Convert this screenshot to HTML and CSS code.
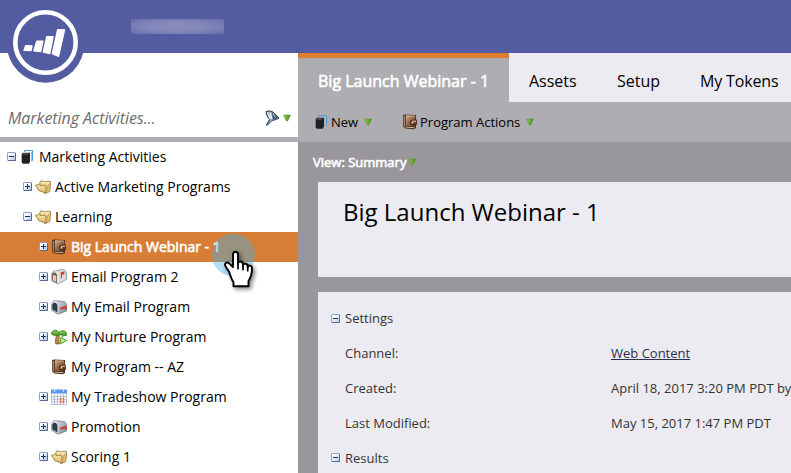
FILE: index.html
```html
<!DOCTYPE html>
<html lang="en">
<head>
<meta charset="utf-8">
<title>Marketing Activities</title>
<link rel="stylesheet" href="styles.css">
</head>
<body>
<svg class="sprites" width="0" height="0" aria-hidden="true">
  <defs>
    <linearGradient id="gbox" x1="0" y1="0" x2="1" y2="1"><stop offset="0" stop-color="#fff"/><stop offset=".4" stop-color="#f4f8ff"/><stop offset="1" stop-color="#a9bee0"/></linearGradient>
    <linearGradient id="gfold" x1="0" y1="0" x2="0" y2="1"><stop offset="0" stop-color="#ffeab0"/><stop offset="1" stop-color="#dcb25e"/></linearGradient>
    <linearGradient id="gbrown" x1="0" y1="0" x2="1" y2="1"><stop offset="0" stop-color="#d3ae90"/><stop offset=".5" stop-color="#94694a"/><stop offset="1" stop-color="#5b3821"/></linearGradient>
    <linearGradient id="gsteel" x1="0" y1="0" x2="1" y2="1"><stop offset="0" stop-color="#e4e9ee"/><stop offset="1" stop-color="#7b8690"/></linearGradient>
    <linearGradient id="gtri" x1="0" y1="0" x2="1" y2="0"><stop offset="0" stop-color="#8fca5a"/><stop offset=".45" stop-color="#6fb536"/><stop offset="1" stop-color="#3c7f14"/></linearGradient>
  </defs>
  <symbol id="minus" viewBox="0 0 9 9"><rect x=".5" y=".5" width="8" height="8" rx=".6" fill="url(#gbox)" stroke="#8ba0c2"/><path d="M8.500 1v7.500H1" fill="none" stroke="#526b92"/><path d="M2 4.500h5" stroke="#1d3153"/></symbol>
  <symbol id="plus" viewBox="0 0 9 9"><rect x=".5" y=".5" width="8" height="8" rx=".6" fill="url(#gbox)" stroke="#8ba0c2"/><path d="M8.500 1v7.500H1" fill="none" stroke="#526b92"/><path d="M2 4.500h5M4.500 2v5" stroke="#1d3153"/></symbol>
  <symbol id="stack" viewBox="0 0 16 16"><path d="M5.500 3V1.500h8v10h-1.500" fill="none" stroke="#449bdc" stroke-width="1"/><path d="M12.500 3v8.500" stroke="#8cc3ec" stroke-width="1"/><path d="M2.700 5 4 3.700h7V12.500L9.800 14.700H4L2.700 13.600z" fill="#202123"/><path d="M3.700 5h5.600" stroke="#64676b" stroke-width="1"/></symbol>
  <symbol id="folder" viewBox="0 0 16 16"><path d="M4.500 4.200 6 1.600l3 1.200 6.300-.6.300 1.500-1 8.800-5 2z" fill="#f2d88f" stroke="#92793e" stroke-width=".8"/><path d="M6.500 3.700 14 3.900" stroke="#fff4cd"/><path d="M.5 6.200 4 5.500l1.200 1 4.800-.3.600.9.600 7L3.800 11.700z" fill="url(#gfold)" stroke="#8f7031" stroke-width=".8" stroke-linejoin="round"/><path d="M11.200 14 14.600 12.500l.9-8.500-3.200 3z" fill="#e3c170" stroke="#94783f" stroke-width=".5"/></symbol>
  <symbol id="book" viewBox="0 0 16 16"><path d="M1.200 1 3 .5l11 .5v13l-2 1.200L3.500 14.500l-2.300-1.700z" fill="#4a2f1c"/><path d="M3.900 1.500 13.300 1.900v10.300l-9.400-.4z" fill="url(#gbrown)"/><path d="M4 1.700 13 2" stroke="#e4cbb5" stroke-width=".7"/><path d="M2.500 2v10.700" stroke="#a98365" stroke-width="1.200"/><path d="M3.500 13.100 12.500 13.700" stroke="#cdb49c" stroke-width="1"/><path d="M14.500 6 9.900 6.300a2.200 2.200 0 0 0 0 4.300l4.600-.2z" fill="#6d4326" stroke="#331c0e" stroke-width=".8"/><path d="M10 7.200h4.200" stroke="#ecd4be" stroke-width="1"/><circle cx="10.300" cy="8.800" r=".9" fill="#f3ded0"/></symbol>
  <symbol id="mailbox" viewBox="0 0 16 16"><path d="M.6 5.800C1 2 4 1.200 5.500 1.800l7.500.8c2 .6 2.700 2.500 2.500 5V12L7 15.200.8 11.500z" fill="url(#gsteel)" stroke="#68727c" stroke-width=".7"/><path d="M1.300 10.600V5.800C2 3 5.600 2.700 6.700 6.400v7z" fill="#343c45"/><path d="M7.200 14.500V7C7 4 5.500 2.500 4 2.200" fill="none" stroke="#eef2f5" stroke-width=".9"/><path d="M1.300 11.200 6.700 14" stroke="#bdc6cf"/><path d="m9.300 8.400 5.300-1.500v-.7l1 .2v4l-1 .3V9.500L9.300 10.600z" fill="#d93829"/></symbol>
  <symbol id="mailopen" viewBox="0 0 16 16"><path d="M.6 5.500C1 2 3.300 1.500 4.500 2l6-1.500c3 0 5 1.500 5 4.500v5.300L6.700 15 .8 12z" fill="#d6dce1" stroke="#747e88" stroke-width=".7"/><path d="M1.100 11.300V5.500C1.900 2.700 5.300 3 6.300 6.300v8z" fill="#765d4e"/><path d="m2 6 3.200 1v5.700L2 11.200z" fill="#eee5da"/><path d="m2.300 7.500 2.500 4M4.800 7.700l-2.300 2.900" stroke="#af947f" stroke-width=".6"/><path d="M7 14.200V6.500C7 4 5.500 2.500 4.500 2" fill="none" stroke="#fff"/><path d="M9.800 9.500V3.300l3.500-.9v2.800l-2.300.6v3.300z" fill="#d83b2e"/></symbol>
  <symbol id="palm" viewBox="0 0 16 16"><path d="M6.500 5.500C4.300 8 4 12 4.700 15h4C7.700 12 7.700 8 9 5.500z" fill="#ad7845" stroke="#6f4825" stroke-width=".6"/><path d="M4.800 8h2.900M4.600 10.300h2.700M4.800 12.700h2.900" stroke="#e0b881" stroke-width=".6"/><path d="M7.500 3.500C6.500.5 3 .4.600 3.300l.3 2.500 2-.7-.1 1.900 2.500-1 .2 1.500L8 5.300l3 .7.500 2 1.200-1.500 2.700.2C16 2.200 12.500-.1 7.500 3.500z" fill="#55a52d" stroke="#2e7112" stroke-width=".7" stroke-linejoin="round"/><path d="M2 3.500Q5 1.500 7 4.500M8.500 4q3-2 5.500-.3" stroke="#a8dc71" fill="none" stroke-width=".9"/><path d="m9.700 8.500 5.800 3-5.800 3.200z" fill="#c2efa0" stroke="#459c1d" stroke-width="1" stroke-linejoin="round"/></symbol>
  <symbol id="calendar" viewBox="0 0 16 16"><path d="M.4 2h15.200v13.600H.4z" fill="#fff" stroke="#8f9eb8" stroke-width=".7"/><path d="M0 .5h16v4H0z" fill="#5b97ea"/><path d="M3.500.3v2.500M12.500.3v2.500" stroke="#d5e6ff" stroke-width="1.200"/><path d="M3.500 5v10.500M6.500 5v10.500M9.500 5v10.500M12.500 5v10.500M.5 7.500h15M.5 10.200h15M.5 12.900h15" stroke="#9aa7bf" stroke-width=".7"/><path d="M9.500 9.800h3.200v3.200H9.500z" fill="#fff" stroke="#dc6537" stroke-width="1.100"/></symbol>
  <symbol id="tri" viewBox="0 0 8 8"><path d="M.6 1h6.800L4.700 7h-1.400z" fill="url(#gtri)" stroke="#4f8f28" stroke-width=".5" stroke-linejoin="round"/></symbol>
</svg>

<header class="topbar">
  <div class="account"></div>
  <svg class="logo" viewBox="0 0 92 84"><circle cx="45.500" cy="44" r="38.700" fill="#545ca1"/><circle cx="45.500" cy="42.500" r="30.200" fill="#545ca1" stroke="#fff" stroke-width="4.600"/><g fill="#fff" stroke="#fff" stroke-linejoin="round" stroke-width="1.200"><path d="m25.600 45.700 6.500.1-1 4.800-7.200-.2z"/><path d="m36.700 41.200 6.300-.1-2.300 10.500-6.900-.8z"/><path d="m46.700 36.700 6.500-.1-3.400 17.100-6.600-1.600z"/><path d="m57.600 29.700 7 .1-6 26.600-6.400-2.600z"/></g></svg>
</header>

<div class="workspace">
  <aside class="sidebar">
    <div class="search">
      <span class="search-text">Marketing Activities...</span>
      <svg class="filter" viewBox="0 0 16 16"><path d="M1 1.500Q4 0 8 2L14 8q-3 2-7 2.500L2 15.500 1.300 15 4.500 9.500Q1 6 1 1.500z" fill="#8fa2b8" stroke="#2c4059" stroke-width="1"/><path d="m2.500 2.500 3 6.500M5 2.500l2 6.500" stroke="#edf5fc" stroke-width="1.400"/><path d="M7 2.500 13 8 8 9.500z" fill="#334963"/><path d="m8 3.700 2.500 4.500" stroke="#a7bad0"/></svg>
      <svg class="tri"><use href="#tri"/></svg>
    </div>
    <nav class="tree">
      <div class="node root"><svg class="exp"><use href="#minus"/></svg><svg class="ico"><use href="#stack"/></svg><span>Marketing Activities</span></div>
      <div class="node l1"><svg class="exp"><use href="#plus"/></svg><svg class="ico"><use href="#folder"/></svg><span>Active Marketing Programs</span></div>
      <div class="node l1"><svg class="exp"><use href="#minus"/></svg><svg class="ico"><use href="#folder"/></svg><span>Learning</span></div>
      <div class="node l2 selected"><svg class="exp"><use href="#plus"/></svg><svg class="ico"><use href="#book"/></svg><span class="heavy">Big Launch Webinar - 1</span></div>
      <div class="node l2"><svg class="exp"><use href="#plus"/></svg><svg class="ico"><use href="#mailopen"/></svg><span>Email Program 2</span></div>
      <div class="node l2"><svg class="exp"><use href="#plus"/></svg><svg class="ico"><use href="#mailbox"/></svg><span>My Email Program</span></div>
      <div class="node l2"><svg class="exp"><use href="#plus"/></svg><svg class="ico"><use href="#palm"/></svg><span>My Nurture Program</span></div>
      <div class="node l2"><span class="exp"></span><svg class="ico"><use href="#book"/></svg><span>My Program -- AZ</span></div>
      <div class="node l2"><svg class="exp"><use href="#plus"/></svg><svg class="ico"><use href="#calendar"/></svg><span>My Tradeshow Program</span></div>
      <div class="node l2"><svg class="exp"><use href="#plus"/></svg><svg class="ico"><use href="#mailbox"/></svg><span>Promotion</span></div>
      <div class="node l2"><svg class="exp"><use href="#plus"/></svg><svg class="ico"><use href="#folder"/></svg><span>Scoring 1</span></div>
    </nav>
  </aside>

  <main class="content">
    <div class="tabs">
      <div class="tab active heavy">Big Launch Webinar - 1</div>
      <div class="tab">Assets</div>
      <div class="tab">Setup</div>
      <div class="tab">My Tokens</div>
    </div>
    <div class="toolbar">
      <div class="tool new"><svg class="ico"><use href="#stack"/></svg><span>New</span><svg class="tri"><use href="#tri"/></svg></div>
      <div class="tool"><svg class="ico"><use href="#book"/></svg><span>Program Actions</span><svg class="tri"><use href="#tri"/></svg></div>
    </div>
    <div class="viewbar"><span class="heavy">View: Summary</span><svg class="tri"><use href="#tri"/></svg></div>
    <section class="card title"><h1>Big Launch Webinar - 1</h1></section>
    <section class="card details">
      <div class="group first"><svg class="exp"><use href="#minus"/></svg><span>Settings</span></div>
      <div class="field"><span class="label">Channel:</span><a class="link">Web Content</a></div>
      <div class="field"><span class="label">Created:</span><span>April 18, 2017 3:20 PM PDT by</span></div>
      <div class="field"><span class="label">Last Modified:</span><span>May 15, 2017 1:47 PM PDT</span></div>
      <div class="group"><svg class="exp"><use href="#minus"/></svg><span>Results</span></div>
    </section>
  </main>
</div>

<div class="pointer">
  <svg viewBox="0 0 50 60"><circle cx="21.500" cy="21" r="21.500" fill="#3fb1f0" fill-opacity=".4"/><g class="hand" transform="translate(-2 .7)"><path d="M19 37 15.500 31.500C14 28.500 17 26.500 19.500 29l3.500 3.500V20c0-4 5-4 5 0v9c0-3 5-3 5 .500V31c0-3 4.700-2.500 4.700.5v1c0-2.600 4.300-2 4.300.8 0 6-.8 9-3.500 13V51.500H23.500v-4C21 44 20.500 40.500 19 37z" fill="#fff" stroke="#000" stroke-width="1.900" stroke-linejoin="round"/><path d="M28 28v6M33 30v5M37.700 32v4" stroke="#000" stroke-width="1.700" stroke-linecap="round"/></g></svg>
</div>
</body>
</html>
```

FILE: styles.css
```css
* { box-sizing: border-box; }
body {
  margin: 0;
  width: 791px;
  height: 473px;
  overflow: hidden;
  position: relative;
  background: #fff;
  color: #000;
  font-family: "Open Sans", "Noto Sans", sans-serif;
  font-size: 14px;
}
.sprites { position: absolute; }
svg { display: block; flex: none; }
span, h1, .tab { white-space: nowrap; }
.heavy { -webkit-text-stroke: .6px currentColor; }

.topbar { position: relative; height: 53px; background: #545ca1; padding: 19px 0 0 131px; }
.account {
  width: 93px;
  height: 15px;
  background: radial-gradient(ellipse at center, #858abb 35%, #777db4 70%, #646bab 100%);
}
.logo { position: absolute; left: 0; top: 0; width: 92px; height: 84px; }

.workspace { display: flex; height: 420px; }
.sidebar { width: 298px; flex: none; background: #fff; }
.search {
  height: 89px;
  border-bottom: 5px solid #aeadb2;
  padding: 46px 7px 0 8px;
  display: flex;
  align-items: center;
}
.search-text { flex: 1; font-size: 16px; font-style: italic; color: #6d6d6d; letter-spacing: -.05px; }
.filter { width: 16px; height: 16px; margin-right: 2px; }
.tri { width: 8px; height: 8px; }

.node { display: flex; align-items: center; height: 30px; padding: 0 0 1px 7px; }
.l1 { padding-left: 23px; }
.l2 { padding-left: 39px; }
.exp { width: 9px; height: 9px; margin-right: 3px; flex: none; }
.ico { width: 16px; height: 16px; margin-right: 4px; }
.node .ico { margin-top: 1px; }
.node span { line-height: 19px; }
.selected { background: #d77d36; color: #fff; }

.content { flex: 1; min-width: 0; background: #99979c; overflow: hidden; }
.tabs { display: flex; height: 49px; background: #ecebf1; font-size: 16px; }
.tab { width: 88px; padding-left: 20px; line-height: 57px; flex: none; }
.tab:last-child { width: 110px; letter-spacing: -.15px; }
.tab:nth-child(3) { width: 83px; }
.active {
  width: 211px;
  border-top: 5px solid #de7c2f;
  background: #aeadb2;
  color: #fff;
  line-height: 47px;
}
.toolbar { display: flex; height: 40px; padding-left: 15px; background: #aeadb2; font-size: 13px; }
.tool { display: flex; align-items: center; }
.tool .ico { margin-right: 2px; }
.tool .tri { margin-left: 6px; }
.new { width: 89px; }
.viewbar { display: flex; align-items: center; height: 40px; padding-left: 15px; color: #fff; font-size: 13px; }
.viewbar .tri { margin-left: 2px; }
.card { margin-left: 20px; background: #ecebf1; }
.title { height: 95px; padding: 13px 0 0 25px; }
h1 { margin: 0; font-size: 24px; line-height: 33px; font-weight: 400; }
.details { margin-top: 15px; padding: 9px 0 0 13px; height: 200px; font-size: 13px; color: #333; }
.group, .field { display: flex; align-items: center; height: 35px; }
.group.first { height: 34px; }
.group .exp { margin-right: 5px; }
.field { padding-left: 14px; }
.label { width: 266px; flex: none; }
.link { color: #27304f; text-decoration: underline; }

.pointer { position: absolute; left: 212px; top: 234px; width: 50px; height: 60px; }
.hand { filter: drop-shadow(2px 2px 2px rgba(0, 0, 0, .5)); }
```
